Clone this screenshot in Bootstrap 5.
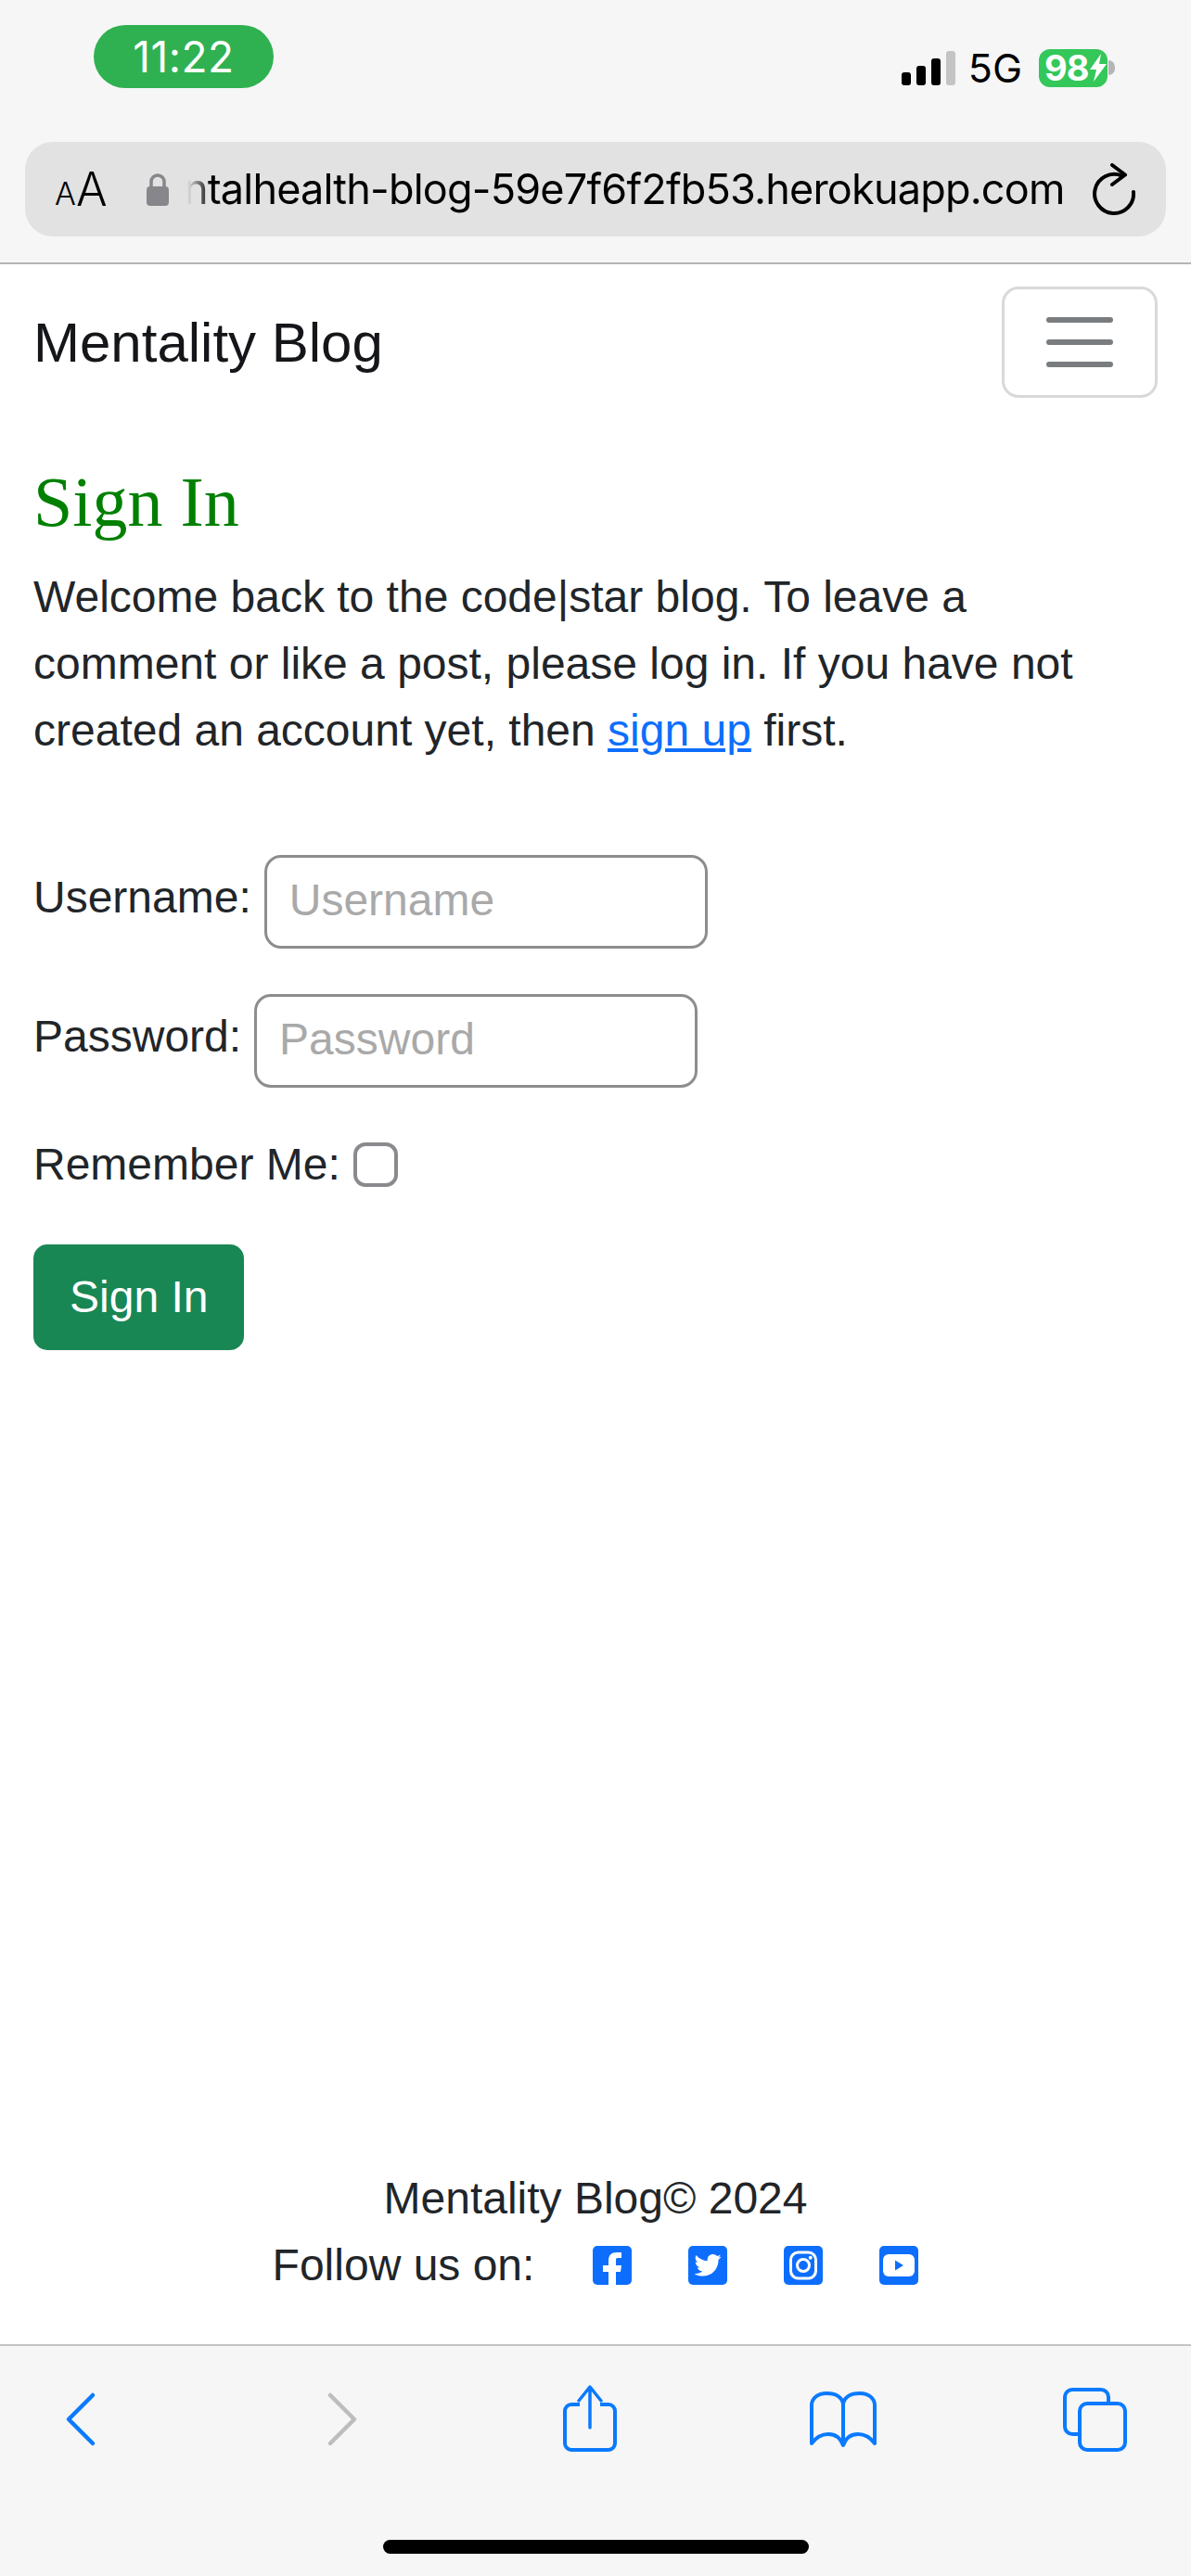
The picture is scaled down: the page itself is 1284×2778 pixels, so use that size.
<!DOCTYPE html>
<html lang="en">
<head>
    <meta charset="UTF-8">
    <meta name="viewport" content="width=device-width, initial-scale=1.0">
    <title>Sign In</title>
    <link href="https://cdn.jsdelivr.net/npm/bootstrap@5.3.3/dist/css/bootstrap.min.css" rel="stylesheet">
    <style>
        html, body { height: 2778px; }
        body { font-family: "Liberation Sans", Arial, sans-serif; font-size: 48px; line-height: 72px; color: #212529; overflow: hidden; }

        /* safari chrome, top */
        .safari-top { height: 285px; background: #f6f6f6; border-bottom: 2px solid #b4b4b4; flex: none; }
        .status-row { height: 153px; padding: 27px 82px 0 101px; }
        .time-pill { width: 194px; height: 68px; border-radius: 34px; background: #30b151; color: #fff; font: 400 46px/68px Inter, sans-serif; letter-spacing: .5px; text-align: center; }
        .status-right { margin-top: 25px; height: 42px; }
        .net-label { font: 400 43px/42px Inter, sans-serif; color: #000; margin: 0 18px 0 14px; }
        .batt { width: 74px; height: 41px; border-radius: 12px; background: #34c759; color: #fff; font: 700 38px/41px Inter, sans-serif; padding-left: 6px; letter-spacing: -1px; }
        .batt svg { margin-left: 1px; flex: none; }
        .batt-nub { width: 7px; height: 16px; margin-left: 1px; background: #b5b5b5; border-radius: 0 8px 8px 0; }
        .addr-bar { height: 102px; margin: 0 27px; background: #e2e2e2; border-radius: 30px; padding: 0 31px 0 32px; }
        .aa-big { font: 300 50px/1 Inter, sans-serif; color: #000; }
        .aa-small { font: 300 34px/1 Inter, sans-serif; color: #000; margin-top: 10px; }
        .addr-lock { margin-left: 42px; flex: none; }
        .addr-url { width: 946px; margin-left: 20px; font: 400 45px/60px Inter, sans-serif; letter-spacing: -.8px; color: #000; white-space: nowrap; overflow: hidden; justify-content: flex-end; -webkit-mask-image: linear-gradient(to right, transparent 0, #000 26px); mask-image: linear-gradient(to right, transparent 0, #000 26px); }
        .addr-reload { margin-left: 30px; flex: none; }

        /* site nav */
        .site-nav { padding: 24px 36px 0; flex: none; }
        .site-nav .navbar-brand { font-size: 60px; line-height: 90px; padding: 16px 0 14px; margin: 0; color: #141619; }
        .site-nav .navbar-toggler { font-size: 60px; padding: 12px 36px; border-width: 3px; border-radius: 18px; }
        .site-nav .navbar-toggler-icon { opacity: .8; }

        /* page */
        .page-main { padding: 0 36px; }
        .page-title { font-family: "Liberation Serif", Georgia, serif; font-size: 76px; line-height: 91px; color: #008000; margin: 67px 0 21px; }
        .intro-text { margin-bottom: 98px; }
        .intro-text a { color: #0d6efd; }
        .field-row { margin-bottom: 49px; gap: 14px; }
        .field-row label { margin-bottom: 10px; }
        .field-row .form-control { width: 478px; height: 101px; font-size: 48px; padding: 0 24px 4px; border: 3px solid #8d8d90; border-radius: 18px; }
        .field-row .form-control::placeholder { color: #a9a9a9; }
        .check-row { margin-bottom: 50px; gap: 14px; margin-top: -2px; }
        .check-row .form-check-input { width: 48px; height: 48px; margin: 0; border: 4px solid #8a8a8e; border-radius: 13px; }
        .signin-btn { font-size: 48px; line-height: 72px; padding: 18px 36px; border-radius: 15px; border: 3px solid #198754; }

        /* footer */
        .site-foot { padding-bottom: 49px; flex: none; }
        .follow-row svg { margin-left: 61px; }
        .follow-row svg.first-icon { margin-left: 63px; }

        /* safari chrome, bottom */
        .safari-bottom { height: 250px; background: #f6f6f6; border-top: 2px solid #c4c4c4; flex: none; padding-top: 42px; }
        .tool-row { height: 73px; }
        .tool-back { margin-left: 70px; }
        .tool-fwd { margin-left: 248px; }
        .tool-share { margin-left: 220px; }
        .tool-book { margin-left: 206px; }
        .tool-tabs { margin-left: 199px; }
        .home-bar { width: 459px; height: 15px; border-radius: 8px; background: #000; margin: 94px auto 0; }
    </style>
</head>
<body class="d-flex flex-column">
    <div class="safari-top">
        <div class="status-row d-flex justify-content-between align-items-start">
            <div class="time-pill">11:22</div>
            <div class="status-right d-flex align-items-center">
                <svg width="58" height="37" viewBox="0 0 58 37">
                    <rect x="0" y="23" width="10" height="14" rx="3" fill="#000"/>
                    <rect x="16" y="16" width="10" height="21" rx="3" fill="#000"/>
                    <rect x="32" y="8" width="10" height="29" rx="3" fill="#000"/>
                    <rect x="48" y="0" width="10" height="37" rx="3" fill="#c4c4c4"/>
                </svg>
                <span class="net-label">5G</span>
                <div class="batt d-flex align-items-center">
                    <span>98</span>
                    <svg width="20" height="30" viewBox="0 0 20 30"><path d="M13 0 1 17h7L5 30 19 11h-8z" fill="#fff"/></svg>
                </div>
                <div class="batt-nub"></div>
            </div>
        </div>
        <div class="addr-bar d-flex align-items-center">
            <span class="aa-small">A</span><span class="aa-big">A</span>
            <svg class="addr-lock" width="24" height="36" viewBox="0 0 24 36">
                <path d="M5 16V10a7 7 0 0 1 14 0v6" fill="none" stroke="#87878b" stroke-width="3.5"/>
                <rect x="0" y="15" width="24" height="21" rx="4" fill="#87878b"/>
            </svg>
            <div class="addr-url d-flex"><span>mentalhealth-blog-59e7f6f2fb53.herokuapp.com</span></div>
            <svg class="addr-reload" width="46" height="56" viewBox="0 0 46 56">
                <path d="M31 13.5A21 21 0 1 0 44 31" fill="none" stroke="#000" stroke-width="4" stroke-linecap="round"/>
                <path d="M21 2 35 12.500 21 23" fill="none" stroke="#000" stroke-width="4" stroke-linecap="round" stroke-linejoin="round"/>
            </svg>
        </div>
    </div>

    <nav class="navbar navbar-light site-nav d-flex justify-content-between align-items-center">
        <a class="navbar-brand" href="#">Mentality Blog</a>
        <button class="navbar-toggler" type="button"><span class="navbar-toggler-icon"></span></button>
    </nav>

    <main class="page-main flex-grow-1">
        <h1 class="page-title">Sign In</h1>
        <p class="intro-text">Welcome back to the code|star blog. To leave a comment or like a post, please log in. If you have not created an account yet, then <a href="#">sign up</a> first.</p>
        <form>
            <div class="field-row d-flex align-items-center">
                <label for="id_login">Username:</label>
                <input type="text" class="form-control" id="id_login" placeholder="Username">
            </div>
            <div class="field-row d-flex align-items-center">
                <label for="id_password">Password:</label>
                <input type="password" class="form-control" id="id_password" placeholder="Password">
            </div>
            <div class="check-row d-flex align-items-center">
                <label for="id_remember">Remember Me:</label>
                <input type="checkbox" class="form-check-input" id="id_remember">
            </div>
            <button type="submit" class="btn btn-success signin-btn">Sign In</button>
        </form>
    </main>

    <footer class="site-foot text-center">
        <div>Mentality Blog© 2024</div>
        <div class="follow-row d-flex justify-content-center align-items-center">
            <span>Follow us on:</span>
            <svg class="first-icon" width="42" height="42" viewBox="0 0 42 42">
                <rect width="42" height="42" rx="5" fill="#0d6efd"/>
                <path d="M17 42V28H11V21H17V16C17 10 20 7 26 7H31V13H27C25 13 25 14 25 16V21H31L30 28H25V42Z" fill="#fff"/>
            </svg>
            <svg width="42" height="42" viewBox="0 0 42 42">
                <rect width="42" height="42" rx="5" fill="#0d6efd"/>
                <path transform="translate(6.5 6.300) scale(.0566)" fill="#fff" d="M459.37 151.716c.325 4.548.325 9.097.325 13.645 0 138.72-105.583 298.558-298.558 298.558-59.452 0-114.68-17.219-161.137-47.106 8.447.974 16.568 1.299 25.34 1.299 49.055 0 94.213-16.568 130.274-44.832-46.132-.975-84.792-31.188-98.112-72.772 6.498.974 12.995 1.624 19.818 1.624 9.421 0 18.843-1.3 27.614-3.573-48.081-9.747-84.143-51.98-84.143-102.985v-1.299c13.969 7.797 30.214 12.67 47.431 13.319-28.264-18.843-46.781-51.005-46.781-87.391 0-19.492 5.197-37.36 14.294-52.954 51.655 63.675 129.3 105.258 216.365 109.807-1.624-7.797-2.599-15.918-2.599-24.04 0-57.828 46.782-104.934 104.934-104.934 30.213 0 57.502 12.67 76.67 33.137 23.715-4.548 46.456-13.32 66.599-25.34-7.798 24.366-24.366 44.833-46.132 57.827 21.117-2.273 41.584-8.122 60.426-16.243-14.292 20.791-32.161 39.308-52.628 54.253z"/>
            </svg>
            <svg width="42" height="42" viewBox="0 0 42 42">
                <rect width="42" height="42" rx="5" fill="#0d6efd"/>
                <rect x="7.500" y="7" width="27" height="28" rx="8" fill="none" stroke="#fff" stroke-width="3"/>
                <circle cx="21" cy="21" r="6.500" fill="none" stroke="#fff" stroke-width="3"/>
                <circle cx="28.700" cy="12.800" r="2" fill="#fff"/>
            </svg>
            <svg width="42" height="42" viewBox="0 0 42 42">
                <rect width="42" height="42" rx="5" fill="#0d6efd"/>
                <rect x="4" y="9" width="34" height="24" rx="6" fill="#fff"/>
                <path d="M17 15.500 26 21 17 26.500z" fill="#0d6efd"/>
            </svg>
        </div>
    </footer>

    <div class="safari-bottom">
        <div class="tool-row d-flex align-items-center">
            <svg class="tool-back" width="34" height="60" viewBox="0 0 34 60">
                <path d="M30 4 4 30l26 26" fill="none" stroke="#0a7aff" stroke-width="4.500" stroke-linecap="round" stroke-linejoin="round"/>
            </svg>
            <svg class="tool-fwd" width="34" height="60" viewBox="0 0 34 60">
                <path d="M4 4l26 26L4 56" fill="none" stroke="#bdbdbd" stroke-width="4.500" stroke-linecap="round" stroke-linejoin="round"/>
            </svg>
            <svg class="tool-share" width="60" height="73" viewBox="0 0 60 73">
                <path d="M19 21H10a7 7 0 0 0-7 7v35a7 7 0 0 0 7 7h40a7 7 0 0 0 7-7V28a7 7 0 0 0-7-7h-9" fill="none" stroke="#0a7aff" stroke-width="4"/>
                <path d="M30 46V3M18 17 30 2l12 15" fill="none" stroke="#0a7aff" stroke-width="3.500" stroke-linecap="round" stroke-linejoin="round"/>
            </svg>
            <svg class="tool-book" width="74" height="62" viewBox="0 0 74 62">
                <path d="M37 14C35 6 28 3 19 3 10 3 3 8 3 16v41C9 49 15 47 21 47c7 0 13 4 16 12 3-8 9-12 16-12 6 0 12 2 18 10V16C71 8 64 3 55 3c-9 0-16 3-18 11zM37 14v45" fill="none" stroke="#0a7aff" stroke-width="4" stroke-linejoin="round"/>
            </svg>
            <svg class="tool-tabs" width="70" height="70" viewBox="0 0 70 70">
                <path d="M17 51H11a8 8 0 0 1-8-8V11a8 8 0 0 1 8-8h31a8 8 0 0 1 8 8v7" fill="none" stroke="#0a7aff" stroke-width="4"/>
                <rect x="19" y="18" width="49" height="50" rx="8" fill="none" stroke="#0a7aff" stroke-width="4"/>
            </svg>
        </div>
        <div class="home-bar"></div>
    </div>
</body>
</html>
